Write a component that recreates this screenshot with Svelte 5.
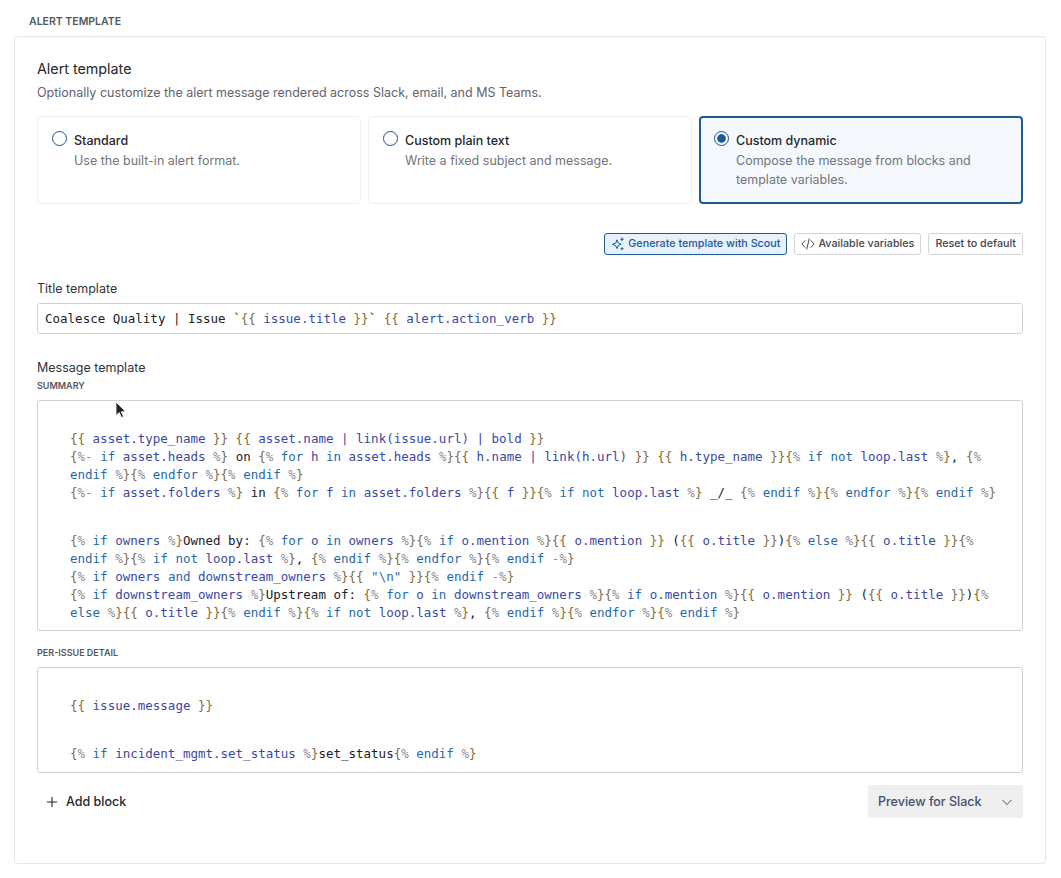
<script>
  const summary = [
    [
      '{{ asset.type_name }} {{ asset.name | link(issue.url) | bold }}',
      '{%- if asset.heads %} on {% for h in asset.heads %}{{ h.name | link(h.url) }} {{ h.type_name }}{% if not loop.last %}, {% endif %}{% endfor %}{% endif %}',
      '{%- if asset.folders %} in {% for f in asset.folders %}{{ f }}{% if not loop.last %} _/_ {% endif %}{% endfor %}{% endif %}'
    ],
    [
      '{% if owners %}Owned by: {% for o in owners %}{% if o.mention %}{{ o.mention }} ({{ o.title }}){% else %}{{ o.title }}{% endif %}{% if not loop.last %}, {% endif %}{% endfor %}{% endif -%}',
      '{% if owners and downstream_owners %}{{ "\\n" }}{% endif -%}',
      '{% if downstream_owners %}Upstream of: {% for o in downstream_owners %}{% if o.mention %}{{ o.mention }} ({{ o.title }}){% else %}{{ o.title }}{% endif %}{% if not loop.last %}, {% endif %}{% endfor %}{% endif %}'
    ]
  ];
  const detail = [
    ['{{ issue.message }}'],
    ['{% if incident_mgmt.set_status %}set_status{% endif %}']
  ];
  const title = 'Coalesce Quality | Issue `{{ issue.title }}` {{ alert.action_verb }}';

  const keywords = new Set(['if', 'for', 'in', 'not', 'and', 'else', 'endif', 'endfor']);

  function tokenize(line) {
    const out = [];
    const re = /(\{\{|\}\}|\{%-?|-?%\})/g;
    let last = 0, inside = false, m;
    const pushInner = (s) => {
      for (const part of s.split(/(\s+|[A-Za-z_]+(?:\.[a-z_]+)*|"[^"]*")/)) {
        if (!part) continue;
        if (keywords.has(part)) out.push({ t: part, c: 'kw' });
        else if (/^\s+$/.test(part)) out.push({ t: part, c: '' });
        else if (part.startsWith('"')) out.push({ t: part, c: 'str' });
        else out.push({ t: part, c: 'var' });
      }
    };
    while ((m = re.exec(line))) {
      const chunk = line.slice(last, m.index);
      if (chunk) {
        if (inside) pushInner(chunk);
        else out.push({ t: chunk, c: 'txt' });
      }
      const d = m[0];
      for (const part of d.split(/([{}]+)/)) {
        if (!part) continue;
        out.push({ t: part, c: /[{}]/.test(part) ? 'brace' : 'pct' });
      }
      inside = d[0] === '{';
      last = m.index + d.length;
    }
    if (last < line.length) out.push({ t: line.slice(last), c: 'txt' });
    return out;
  }

  const modes = [
    { name: 'Standard', desc: 'Use the built-in alert format.', on: false },
    { name: 'Custom plain text', desc: 'Write a fixed subject and message.', on: false },
    { name: 'Custom dynamic', desc: 'Compose the message from blocks and template variables.', on: true }
  ];
</script>

{#snippet codeLine(line)}
  {#each tokenize(line) as tok}<span class={tok.c}>{tok.t}</span>{/each}
{/snippet}

{#snippet codeBox(paragraphs, cls)}
  <div class="code {cls}">
    {#each paragraphs as para}
      <div class="para">
        {#each para as line}
          <div class="line">{@render codeLine(line)}</div>
        {/each}
      </div>
    {/each}
  </div>
{/snippet}

<div class="page">
  <div class="section-label">ALERT TEMPLATE</div>
  <section class="card">
    <h2>Alert template</h2>
    <p class="sub">Optionally customize the alert message rendered across Slack, email, and MS Teams.</p>

    <div class="modes">
      {#each modes as m}
        <div class="mode" class:on={m.on}>
          <span class="radio" class:on={m.on}></span>
          <div class="mode-text">
            <div class="mode-name">{m.name}</div>
            <div class="mode-desc">{m.desc}</div>
          </div>
        </div>
      {/each}
    </div>

    <div class="actions">
      <button class="btn scout">
        <svg width="14" height="14" viewBox="0 0 14 14" fill="none" stroke="currentColor" stroke-width="1" stroke-linejoin="round" stroke-linecap="round">
          <path d="M6 3.2 7.3 6 10 7.3 7.3 8.6 6 11.6 4.6 8.6 1.4 7.3 4.6 6Z" />
          <path d="M11 1v2.6M9.7 2.3h2.6M11 10.6v2.2M9.9 11.7h2.2" />
        </svg>
        Generate template with Scout
      </button>
      <button class="btn">
        <svg width="14" height="14" viewBox="0 0 14 14" fill="none" stroke="currentColor" stroke-width="1" stroke-linecap="round" stroke-linejoin="round">
          <path d="M4 3.6.8 7 4 10.4M10 3.6 13.2 7 10 10.4M8.2 2 5.8 12" />
        </svg>
        Available variables
      </button>
      <button class="btn">Reset to default</button>
    </div>

    <div class="field-label title-label">Title template</div>
    <div class="title-input">{@render codeLine(title)}</div>

    <div class="field-label msg-label">Message template</div>
    <div class="block-label">SUMMARY</div>
    {@render codeBox(summary, 'summary')}

    <div class="block-label second">PER-ISSUE DETAIL</div>
    {@render codeBox(detail, 'detail')}

    <div class="footer">
      <button class="add">
        <svg width="12" height="12" viewBox="0 0 12 12" fill="none" stroke="currentColor" stroke-width="1.1">
          <path d="M6 1v10M1 6h10" />
        </svg>
        Add block
      </button>
      <button class="preview">
        Preview for Slack
        <svg width="12" height="12" viewBox="0 0 12 12" fill="none" stroke="currentColor" stroke-width="1">
          <path d="M1.5 4 6 8.5 10.5 4" />
        </svg>
      </button>
    </div>
  </section>

  <svg class="cursor" width="12" height="18" viewBox="0 0 12 18">
    <path d="M1 1v13.5l3.2-3 2.3 5 2-.9-2.2-4.9h4.4Z" fill="#222" stroke="#fff" stroke-width=".8" />
  </svg>
</div>

<style>
  :global(body) {
    margin: 0;
    background: #fff;
    font-family: Inter, "Liberation Sans", sans-serif;
  }
  .page {
    position: relative;
    width: 1061px;
    height: 878px;
    box-sizing: border-box;
    padding: 15px 15px 0 14px;
    overflow: hidden;
  }
  .section-label {
    height: 21px;
    padding-left: 15px;
    font-size: 10.5px;
    line-height: 13px;
    font-weight: 600;
    color: #55565e;
  }
  .card {
    box-sizing: border-box;
    height: 828px;
    border: 1px solid #e6e6e8;
    border-radius: 4px;
    padding: 22px 22px 0;
  }
  h2 {
    margin: 0;
    font-size: 14.3px;
    line-height: 20px;
    font-weight: 400;
    color: #26262b;
  }
  .sub {
    margin: 5px 0 0;
    font-size: 12.5px;
    line-height: 18px;
    color: #63636b;
  }
  .modes {
    display: grid;
    grid-template-columns: repeat(3, 1fr);
    gap: 7px;
    margin-top: 14px;
  }
  .mode {
    box-sizing: border-box;
    height: 88px;
    display: flex;
    gap: 7px;
    padding: 14px 14px 0;
    border: 1px solid #f0f0f2;
    border-radius: 4px;
  }
  .mode.on {
    border: 2px solid #1d5a9a;
    background: #f5f9fe;
    padding: 13px 13px 0;
  }
  .radio {
    box-sizing: border-box;
    flex: none;
    width: 15px;
    height: 15px;
    border: 1.2px solid #1d4f8c;
    border-radius: 50%;
  }
  .radio.on {
    padding: 1.6px;
    background: #1d5a9a content-box;
  }
  .mode-text {
    padding-top: 1px;
  }
  .mode-name {
    font-size: 12.5px;
    line-height: 18px;
    font-weight: 500;
    color: #26262b;
  }
  .mode-desc {
    margin-top: 1px;
    font-size: 12.5px;
    line-height: 19px;
    color: #74747c;
  }
  .actions {
    display: flex;
    justify-content: flex-end;
    gap: 7px;
    margin-top: 29px;
  }
  .btn {
    box-sizing: border-box;
    height: 22px;
    display: inline-flex;
    align-items: center;
    gap: 3px;
    padding: 0 6px;
    border: 1px solid #d4d4d8;
    border-radius: 3px;
    background: #fff;
    font: 500 10.75px/1 Inter, sans-serif;
    color: #44444c;
  }
  .btn.scout {
    border-color: #1d5a9a;
    background: #e7f1fb;
    color: #1d5a9a;
  }
  .field-label {
    font-size: 12.5px;
    line-height: 18px;
    color: #33333a;
  }
  .title-label {
    margin-top: 25px;
  }
  .title-input {
    box-sizing: border-box;
    height: 31px;
    margin-top: 5px;
    padding: 0 7px;
    border: 1px solid #d2d2d5;
    border-radius: 3px;
    font: 12.5px/29px "DejaVu Sans Mono", monospace;
    color: #26262b;
    white-space: pre;
  }
  .msg-label {
    margin-top: 25px;
  }
  .block-label {
    margin-top: 3px;
    font-size: 9px;
    line-height: 12px;
    font-weight: 600;
    color: #55565e;
  }
  .block-label.second {
    margin-top: 16px;
  }
  .code {
    box-sizing: border-box;
    margin-top: 8px;
    padding: 29px 12px 8px 32px;
    border: 1px solid #d2d2d5;
    border-radius: 3px;
    font: 12.5px/18px "DejaVu Sans Mono", monospace;
    color: #26262b;
  }
  .code.detail {
    padding-bottom: 9px;
  }
  .para + .para {
    margin-top: 30px;
  }
  .line {
    white-space: pre-wrap;
  }
  .brace { color: #7d6a3c; }
  .pct { color: #8c8c90; }
  .kw { color: #1f6aab; }
  .var { color: #3a49a3; }
  .str { color: #3a6a96; }
  .txt { color: #202025; }
  .footer {
    display: flex;
    justify-content: space-between;
    align-items: center;
    margin-top: 12px;
  }
  .add {
    display: inline-flex;
    align-items: center;
    gap: 8px;
    padding: 0 0 0 9px;
    border: 0;
    background: none;
    font: 500 12.5px/18px Inter, sans-serif;
    color: #26262b;
  }
  .preview {
    box-sizing: border-box;
    width: 155px;
    height: 33px;
    display: flex;
    align-items: center;
    justify-content: space-between;
    padding: 0 10px;
    border: 0;
    border-radius: 3px;
    background: #efefef;
    font: 500 12.5px/18px Inter, sans-serif;
    color: #44506a;
  }
  .cursor {
    position: absolute;
    left: 115px;
    top: 401px;
  }
</style>
